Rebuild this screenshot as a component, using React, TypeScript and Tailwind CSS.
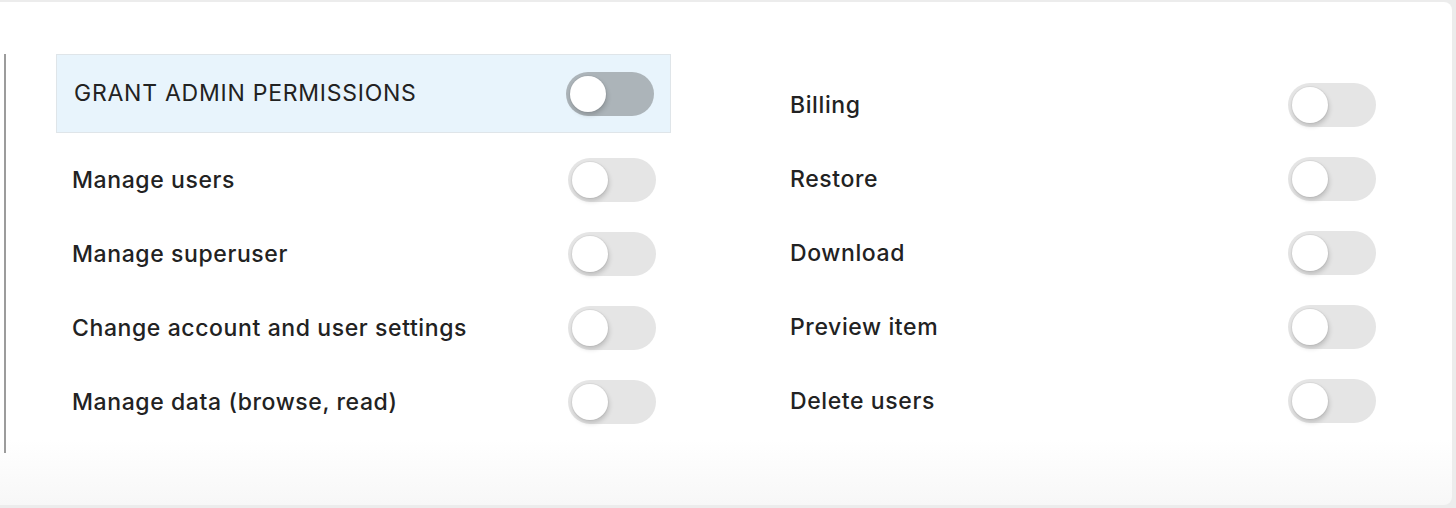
import { useState } from "react";

const leftPerms = [
  "Manage users",
  "Manage superuser",
  "Change account and user settings",
  "Manage data (browse, read)",
];

const rightPerms = ["Billing", "Restore", "Download", "Preview item", "Delete users"];

function Toggle({ on, dark, onClick }: { on: boolean; dark?: boolean; onClick: () => void }) {
  return (
    <button
      onClick={onClick}
      className={`relative w-[88px] h-[44px] rounded-full shrink-0 ${
        dark ? "bg-[#acb4b9]" : "bg-[#e5e5e5]"
      }`}
    >
      <span
        className={`absolute top-[4px] w-[36px] h-[36px] rounded-full bg-white shadow-[1px_3px_5px_rgba(0,0,0,0.18),0_0_0_1px_rgba(0,0,0,0.04)] transition-all ${
          on ? "left-[48px]" : "left-[4px]"
        }`}
      />
    </button>
  );
}

function PermRow({ label }: { label: string }) {
  const [on, setOn] = useState(false);
  return (
    <div className="h-[74px] flex items-center justify-between pl-[16px] pr-[15px]">
      <span className="text-[23px] font-medium text-[#222] tracking-[0.6px]">{label}</span>
      <Toggle on={on} onClick={() => setOn(!on)} />
    </div>
  );
}

export default function App() {
  const [admin, setAdmin] = useState(false);

  return (
    <div
      className="w-[1456px] h-[508px] bg-[#ececec] pt-[2px] pr-[4px] pb-[3px]"
      style={{ fontFamily: "Inter, 'Liberation Sans', sans-serif" }}
    >
      <div className="h-full bg-white rounded-r-[8px] pt-[52px] pl-[4px] bg-gradient-to-b from-white from-87% to-[#f7f7f7]">
        <div className="h-[399px] border-l-2 border-[#9c9c9c] pl-[50px] grid grid-cols-[615px_617px] gap-x-[103px]">
          {/* Left column */}
          <div className="flex flex-col">
            <div className="h-[79px] bg-[#e8f4fc] border border-[#dfe5e9] flex items-center justify-between pl-[17px] pr-[16px]">
              <span className="text-[23px] font-normal text-[#222] tracking-[0.75px]">
                GRANT ADMIN PERMISSIONS
              </span>
              <Toggle on={admin} dark onClick={() => setAdmin(!admin)} />
            </div>
            <div className="mt-[10px]">
              {leftPerms.map((p) => (
                <PermRow key={p} label={p} />
              ))}
            </div>
          </div>

          {/* Right column */}
          <div className="flex flex-col pt-[14px]">
            {rightPerms.map((p) => (
              <PermRow key={p} label={p} />
            ))}
          </div>
        </div>
      </div>
    </div>
  );
}
